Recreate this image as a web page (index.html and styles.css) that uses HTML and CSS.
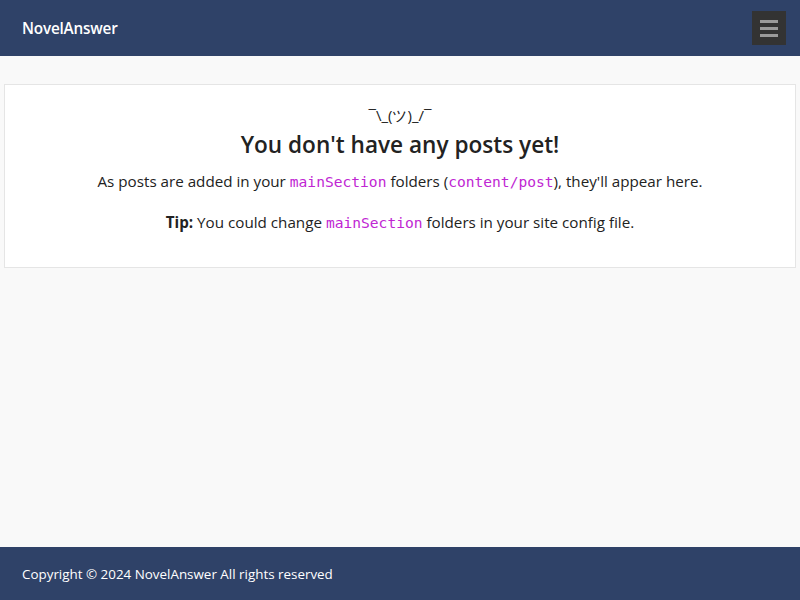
FILE: index.html
```html
<!DOCTYPE html>
<html lang="en">
<head>
<meta charset="utf-8">
<title>NovelAnswer</title>
<link rel="stylesheet" href="styles.css">
</head>
<body>
<div class="page">
  <header class="topbar">
    <a class="brand" href="#">NovelAnswer</a>
    <button class="menu-btn" aria-label="Menu">
      <span class="bar"></span><span class="bar"></span><span class="bar"></span>
    </button>
  </header>
  <main class="main">
    <section class="card">
      <div class="shrug">¯\_(ツ)_/¯</div>
      <h1 class="title">You don't have any posts yet!</h1>
      <p class="text">As posts are added in your <code>mainSection</code> folders (<code>content/post</code>), they'll appear here.</p>
      <p class="text"><strong>Tip:</strong> You could change <code>mainSection</code> folders in your site config file.</p>
    </section>
  </main>
  <footer class="footer">Copyright © 2024 NovelAnswer All rights reserved</footer>
</div>
</body>
</html>
```
FILE: styles.css
```css
* { box-sizing: border-box; }
html, body { margin: 0; padding: 0; height: 100%; }
body {
  font-family: "Open Sans", "Noto Sans", "Liberation Sans", sans-serif;
  background: #f9f9f9;
  color: #222;
}
.page { display: flex; flex-direction: column; min-height: 100vh; }
.topbar {
  height: 56px;
  background: #2f4268;
  display: flex;
  align-items: center;
  justify-content: space-between;
  padding: 0 14px 0 22px;
}
.brand {
  color: #fff;
  text-decoration: none;
  font-weight: 600;
  font-size: 15.3px;
  letter-spacing: -0.2px;
}
.menu-btn {
  width: 34px;
  height: 34px;
  background: #333;
  border: 0;
  padding: 0;
  display: flex;
  flex-direction: column;
  align-items: center;
  justify-content: center;
  gap: 4px;
}
.bar { display: block; width: 18px; height: 3px; background: #9a9a9a; }
.main { flex: 1; padding: 28px 4px 0; }
.card {
  background: #fff;
  border: 1px solid #e5e5e5;
  text-align: center;
  padding: 21px 16px 21px;
}
.shrug { font-size: 15px; line-height: 18px; }
.title { font-size: 22.6px; font-weight: 600; margin: 6px 0 10px; line-height: 30px; color: #222; }
.text { font-size: 15.2px; margin: 0 0 18px; line-height: 22px; }
.text:last-child { margin-bottom: 12px; }
code {
  font-family: "DejaVu Sans Mono", "Liberation Mono", monospace;
  font-size: 14.6px;
  color: #c026d3;
}
strong { font-weight: 700; }
.footer {
  height: 53px;
  background: #2f4268;
  color: #fff;
  font-size: 13.4px;
  display: flex;
  align-items: center;
  padding: 0 22px;
}
```
